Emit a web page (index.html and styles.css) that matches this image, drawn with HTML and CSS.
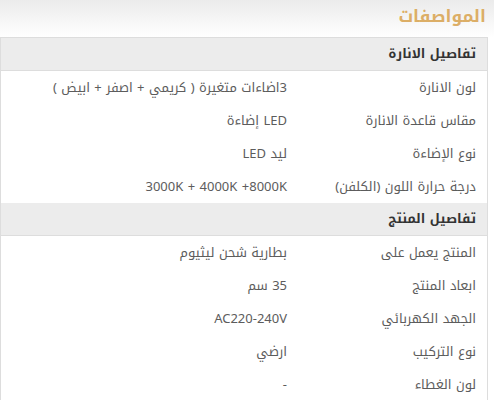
FILE: index.html
```html
<!DOCTYPE html>
<html lang="ar" dir="rtl">
<head>
<meta charset="utf-8">
<title>المواصفات</title>
<link rel="stylesheet" href="styles.css">
</head>
<body>
<div class="specs">
  <h2 class="specs-title">المواصفات</h2>
  <div class="specs-table">
    <div class="group-head">تفاصيل الانارة</div>
    <div class="row"><div class="label">لون الانارة</div><div class="value">3اضاءات متغيرة ( كريمي + اصفر + ابيض )</div></div>
    <div class="row"><div class="label">مقاس قاعدة الانارة</div><div class="value">LED إضاءة</div></div>
    <div class="row"><div class="label">نوع الإضاءة</div><div class="value">ليد LED</div></div>
    <div class="row"><div class="label">درجة حرارة اللون (الكلفن)</div><div class="value">3000K + 4000K +8000K</div></div>
    <div class="group-head">تفاصيل المنتج</div>
    <div class="row"><div class="label">المنتج يعمل على</div><div class="value">بطارية شحن ليثيوم</div></div>
    <div class="row"><div class="label">ابعاد المنتج</div><div class="value">35 سم</div></div>
    <div class="row"><div class="label">الجهد الكهربائي</div><div class="value">AC220-240V</div></div>
    <div class="row"><div class="label">نوع التركيب</div><div class="value">ارضي</div></div>
    <div class="row"><div class="label">لون الغطاء</div><div class="value">-</div></div>
  </div>
</div>
</body>
</html>
```
FILE: styles.css
```css
html, body {
  margin: 0;
  padding: 0;
  background: #fff;
}
body {
  font-family: "Noto Kufi Arabic", "Droid Arabic Kufi", "Open Sans", "Noto Sans", sans-serif;
  font-size: 13px;
  color: #5c5c5c;
  overflow: hidden;
}
.specs {
  width: 488px;
  margin-right: 6px;
}
.specs-title {
  margin: 0 -6px 0 0;
  height: 37px;
  line-height: 32px;
  padding: 0 8px 0 0;
  font-size: 17px;
  font-weight: bold;
  color: #dcae66;
  background: linear-gradient(to bottom, #ebebeb 0%, #ffffff 100%);
}
.specs-table {
  border: 1px solid #ddd;
  border-bottom: none;
}
.group-head {
  height: 32px;
  line-height: 32px;
  padding: 0 11px;
  background: #ececec;
  border-bottom: 1px solid #ddd;
  font-weight: bold;
  color: #333;
}
.row {
  display: flex;
  height: 33px;
  align-items: center;
}
.label {
  width: 189px;
  padding: 0 11px;
  box-sizing: border-box;
  flex-shrink: 0;
}
.value {
  padding: 0 11px;
  flex: 1;
}
```
